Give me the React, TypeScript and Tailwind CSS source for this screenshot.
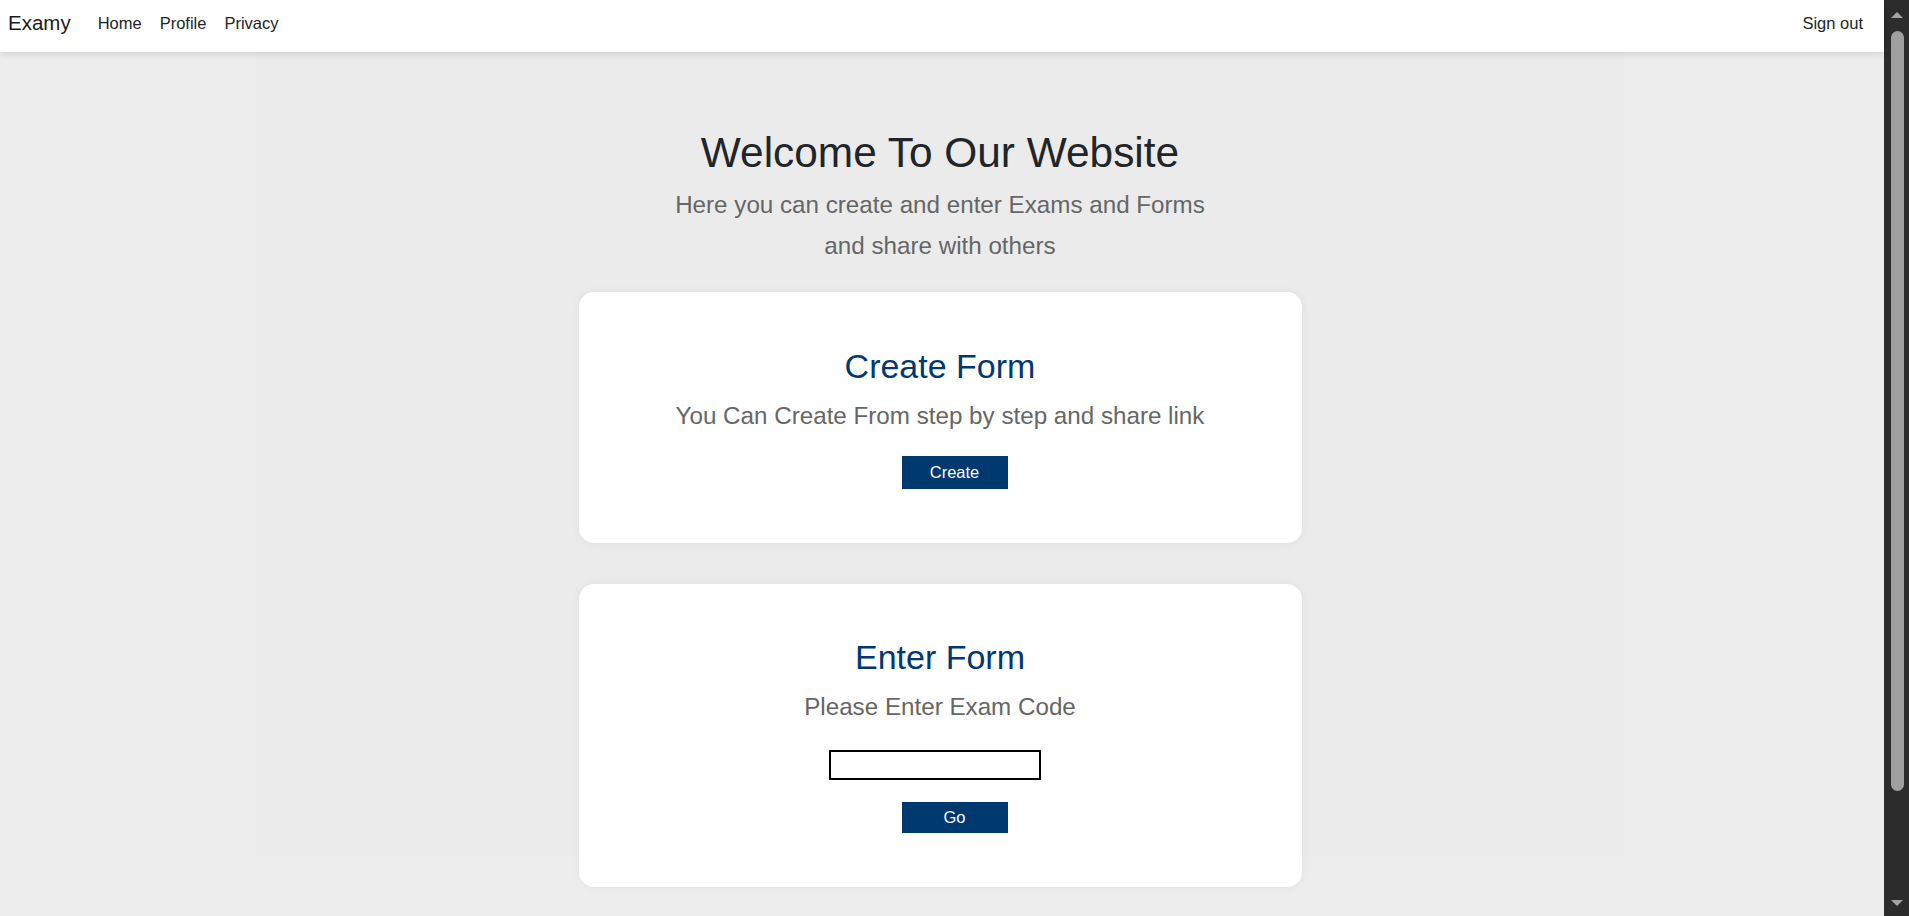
const font = { fontFamily: '"Liberation Sans", Arial, sans-serif' };

function Navbar() {
  return (
    <nav className="relative z-10 flex h-[52px] shrink-0 items-center justify-between bg-white pb-[5px] pl-[8px] pr-[21px] shadow-[0_2px_6px_rgba(0,0,0,0.12)]">
      <div className="flex items-center">
        <span className="text-[20.5px] leading-none text-[#1a1a1a]">Examy</span>
        <div className="ml-[27px] flex items-center gap-[18px] text-[16.5px] leading-none text-[#212529]">
          <a href="#">Home</a>
          <a href="#">Profile</a>
          <a href="#">Privacy</a>
        </div>
      </div>
      <a href="#" className="text-[16.5px] leading-none text-[#212529]">
        Sign out
      </a>
    </nav>
  );
}

function Scrollbar() {
  return (
    <div className="flex h-full w-[25px] shrink-0 flex-col items-center bg-[#2c2c2c] pl-[1px]">
      <div className="mt-[12px] h-0 w-0 border-x-[6.5px] border-b-[6px] border-x-transparent border-b-[#a3a3a3]" />
      <div className="mt-[13px] h-[760px] w-[13px] rounded-full bg-[#9f9f9f]" />
      <div className="flex-1" />
      <div className="mb-[10px] h-0 w-0 border-x-[6.5px] border-t-[6px] border-x-transparent border-t-[#a3a3a3]" />
    </div>
  );
}

export default function App() {
  return (
    <div className="flex h-[916px] w-full overflow-hidden bg-[#ededed]" style={font}>
      <div className="flex min-w-0 flex-1 flex-col">
        <Navbar />

        {/* Main container */}
        <div className="ml-[256px] flex h-[804px] w-[1368px] flex-col items-center bg-[#ebebeb] pt-[76px]">
          <h1 className="text-[42.4px] leading-[50px] text-[#212529]">Welcome To Our Website</h1>
          <p className="mt-[6px] text-center text-[24.2px] leading-[41px] text-[#666666]">
            Here you can create and enter Exams and Forms
            <br />
            and share with others
          </p>

          {/* Create card */}
          <div className="mt-[26px] flex w-[723px] shrink-0 flex-col items-center rounded-[15px] bg-white pb-[54px] pt-[54px] shadow-[0_0_10px_rgba(0,0,0,0.05)]">
            <h2 className="text-[34px] leading-[40px] text-[#003870]">Create Form</h2>
            <p className="mt-[9px] text-[24.2px] leading-[41px] text-[#666666]">
              You Can Create From step by step and share link
            </p>
            <button className="ml-[29px] mt-[20px] h-[33px] w-[106px] bg-[#003870] text-[16.5px] text-white">
              Create
            </button>
          </div>

          {/* Enter card */}
          <div className="mt-[41px] flex w-[723px] shrink-0 flex-col items-center rounded-[15px] bg-white pb-[54px] pt-[53px] shadow-[0_0_10px_rgba(0,0,0,0.05)]">
            <h2 className="text-[34px] leading-[40px] text-[#003870]">Enter Form</h2>
            <p className="mt-[9px] text-[24.2px] leading-[41px] text-[#666666]">Please Enter Exam Code</p>
            <input
              type="text"
              className="mr-[11px] mt-[23px] h-[30px] w-[212px] border-2 border-black bg-white px-1 outline-none"
            />
            <button className="ml-[29px] mt-[22px] h-[31px] w-[106px] bg-[#003870] text-[16.5px] text-white">
              Go
            </button>
          </div>
        </div>
      </div>
      <Scrollbar />
    </div>
  );
}
